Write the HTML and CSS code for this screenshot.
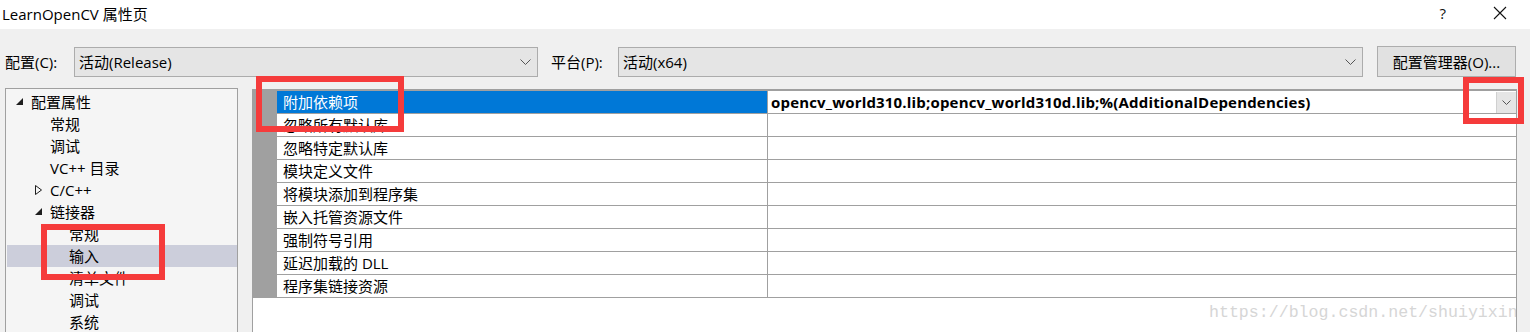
FILE: index.html
```html
<!DOCTYPE html>
<html lang="zh-CN">
<head>
<meta charset="utf-8">
<title>LearnOpenCV 属性页</title>
<link rel="stylesheet" href="styles.css">
</head>
<body>
<div class="window">
  <div class="titlebar">
    <span class="title">LearnOpenCV 属性页</span>
    <div class="caption">
      <span class="help">?</span>
      <svg class="close" width="14" height="14" viewBox="0 0 14 14"><path d="M1 1 L13 13 M13 1 L1 13" stroke="#111" stroke-width="1.1" fill="none"/></svg>
    </div>
  </div>

  <div class="toolbar">
    <span class="lbl lbl-config">配置(C):</span>
    <div class="combo combo-config"><span>活动(Release)</span><svg class="chev" width="11" height="7" viewBox="0 0 11 7"><path d="M0.5 0.5 L5.5 5.5 L10.5 0.5" stroke="#555" stroke-width="1" fill="none"/></svg></div>
    <span class="lbl lbl-platform">平台(P):</span>
    <div class="combo combo-platform"><span>活动(x64)</span><svg class="chev" width="11" height="7" viewBox="0 0 11 7"><path d="M0.5 0.5 L5.5 5.5 L10.5 0.5" stroke="#555" stroke-width="1" fill="none"/></svg></div>
    <div class="btn">配置管理器(O)...</div>
  </div>

  <div class="main">
    <div class="tree">
      <div class="node l0"><svg class="exp" width="8" height="8" viewBox="0 0 8 8"><path d="M7 0 L7 7 L0 7 Z" fill="#1e1e1e"/></svg>配置属性</div>
      <div class="node l1">常规</div>
      <div class="node l1">调试</div>
      <div class="node l1">VC++ 目录</div>
      <div class="node l1"><svg class="exp col" width="8" height="10" viewBox="0 0 8 10"><path d="M0.5 0.5 L6.5 5 L0.5 9.5 Z" fill="none" stroke="#1e1e1e" stroke-width="1"/></svg>C/C++</div>
      <div class="node l1"><svg class="exp" width="8" height="8" viewBox="0 0 8 8"><path d="M7 0 L7 7 L0 7 Z" fill="#1e1e1e"/></svg>链接器</div>
      <div class="node l2">常规</div>
      <div class="node l2 sel">输入</div>
      <div class="node l2">清单文件</div>
      <div class="node l2">调试</div>
      <div class="node l2">系统</div>
    </div>

    <div class="grid">
      <div class="rows">
        <div class="row selrow"><div class="gut"></div><div class="name">附加依赖项</div><div class="val"><span class="valtext">opencv_world310.lib;opencv_world310d.lib;%(AdditionalDependencies)</span><div class="vbtn"><svg width="9" height="6" viewBox="0 0 9 6"><path d="M0.5 0.5 L4.5 4.5 L8.5 0.5" stroke="#555" stroke-width="1" fill="none"/></svg></div></div></div>
        <div class="row"><div class="gut"></div><div class="name">忽略所有默认库</div><div class="val"></div></div>
        <div class="row"><div class="gut"></div><div class="name">忽略特定默认库</div><div class="val"></div></div>
        <div class="row"><div class="gut"></div><div class="name">模块定义文件</div><div class="val"></div></div>
        <div class="row"><div class="gut"></div><div class="name">将模块添加到程序集</div><div class="val"></div></div>
        <div class="row"><div class="gut"></div><div class="name">嵌入托管资源文件</div><div class="val"></div></div>
        <div class="row"><div class="gut"></div><div class="name">强制符号引用</div><div class="val"></div></div>
        <div class="row"><div class="gut"></div><div class="name">延迟加载的 DLL</div><div class="val"></div></div>
        <div class="row"><div class="gut"></div><div class="name">程序集链接资源</div><div class="val"></div></div>
      </div>
      <div class="watermark">https://blog.csdn.net/shuiyixin</div>
    </div>
  </div>

  <div class="mark mark1"></div>
  <div class="mark mark2"></div>
  <div class="mark mark3"></div>
</div>
</body>
</html>
```

FILE: styles.css
```css
html, body {
  margin: 0;
  padding: 0;
}
body {
  width: 1530px;
  height: 332px;
  overflow: hidden;
  background: #f0f0f0;
  font-family: "Open Sans", "Noto Sans CJK SC", sans-serif;
  font-size: 15px;
  color: #000;
}
.window {
  position: relative;
  width: 1530px;
  height: 332px;
}
.titlebar {
  height: 29px;
  background: #fff;
  display: flex;
  align-items: center;
  justify-content: space-between;
  padding: 0 0 3px 2px;
  box-sizing: border-box;
}
.title {
  font-size: 15px;
  color: #000;
}
.caption {
  display: flex;
  align-items: center;
  gap: 47px;
  padding-right: 23px;
}
.help {
  font-size: 15px;
  color: #111;
}
.toolbar {
  display: flex;
  align-items: center;
  height: 59px;
  padding: 17px 0 11px 5px;
  box-sizing: border-box;
}
.lbl {
  white-space: nowrap;
}
.lbl-config { width: 69px; }
.lbl-platform { width: 67px; margin-left: 13px; }
.combo {
  height: 30px;
  box-sizing: border-box;
  border: 1px solid #acacac;
  background: #e5e5e5;
  display: flex;
  align-items: center;
  justify-content: space-between;
  padding: 0 6px 0 4px;
}
.combo-config { width: 464px; }
.combo-platform { width: 745px; }
.chev { margin-top: 1px; }
.btn {
  margin-left: 14px;
  width: 139px;
  height: 31px;
  box-sizing: border-box;
  border: 1px solid #adadad;
  background: #e1e1e1;
  display: flex;
  align-items: center;
  justify-content: center;
  white-space: nowrap;
}
.main {
  display: flex;
  height: 244px;
}
.tree {
  margin-left: 5px;
  width: 233px;
  box-sizing: border-box;
  border: 1px solid #a0a0a0;
  border-bottom: none;
  background: #f5f5f5;
  padding-top: 2px;
}
.node {
  position: relative;
  height: 22px;
  line-height: 22px;
  white-space: nowrap;
}
.node.l0 { padding-left: 25px; }
.node.l1 { padding-left: 44px; }
.node.l2 { padding-left: 63px; }
.node.sel { background: #cccedb; margin-left: 1px; padding-left: 62px; }
.exp {
  position: absolute;
  top: 7px;
}
.l0 .exp { left: 10px; }
.l1 .exp { left: 29px; }
.l1 .exp.col { top: 6px; left: 29px; }
.grid {
  position: relative;
  margin-left: 14px;
  width: 1265px;
  box-sizing: border-box;
  border-left: 1px solid #a0a0a0;
  border-right: 1px solid #a0a0a0;
  background: #fff;
  margin-top: 1px;
  overflow: hidden;
}
.rows {
  border-top: 2px solid #a0a0a0;
}
.row {
  display: flex;
  height: 23px;
  box-sizing: border-box;
  border-bottom: 1px solid #a0a0a0;
}
.gut {
  width: 24px;
  background: #a0a0a0;
  margin-bottom: -1px;
}
.name {
  width: 491px;
  box-sizing: border-box;
  border-right: 1px solid #a0a0a0;
  padding-left: 6px;
  line-height: 22px;
  white-space: nowrap;
}
.selrow .name {
  background: #0078d7;
  color: #fff;
}
.val {
  flex: 1;
  display: flex;
  align-items: center;
  justify-content: space-between;
  padding-left: 3px;
}
.valtext {
  font-weight: bold;
  letter-spacing: 0.18px;
  white-space: nowrap;
}
.vbtn {
  width: 20px;
  height: 21px;
  box-sizing: border-box;
  background: #e5e5e5;
  border-left: 1px solid #d0d0d0;
  display: flex;
  align-items: center;
  justify-content: center;
  margin-top: 1px;
}
.watermark {
  position: absolute;
  left: 956px;
  top: 214px;
  font-family: "Liberation Mono", monospace;
  font-size: 16.6px;
  color: #d6d6d6;
  white-space: nowrap;
}
.mark {
  position: absolute;
  border: 6px solid #f53b3b;
  box-sizing: border-box;
}
.mark1 { left: 256px; top: 76px; width: 148px; height: 56px; }
.mark2 { left: 1463px; top: 77px; width: 61px; height: 47px; }
.mark3 { left: 41px; top: 224px; width: 124px; height: 56px; }
```
